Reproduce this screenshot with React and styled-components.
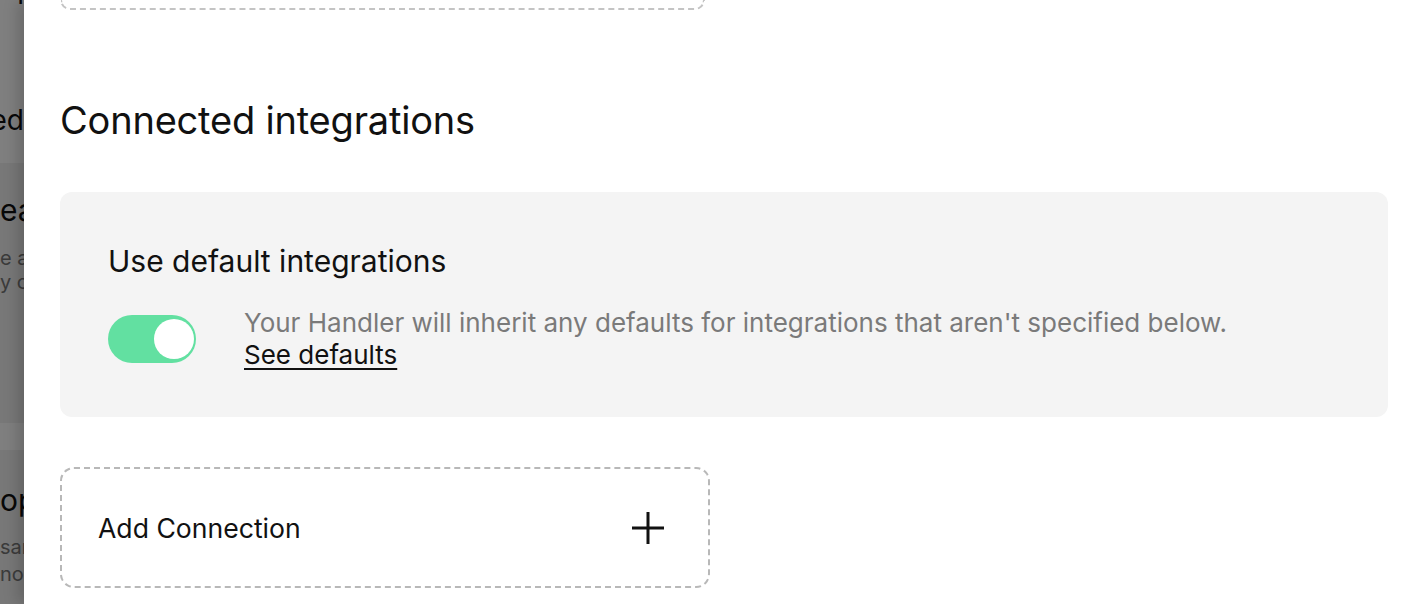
import React from "react";
import styled, { createGlobalStyle } from "styled-components";

const GlobalStyle = createGlobalStyle`
  html, body {
    margin: 0;
    padding: 0;
    height: 100%;
    overflow: hidden;
  }
  body {
    font-family: Inter, "Noto Sans", sans-serif;
    color: #111;
    background: #fff;
  }
  #root {
    height: 100%;
  }
`;

const Screen = styled.div`
  position: relative;
  width: 100%;
  height: 100vh;
  overflow: hidden;
`;

// page underneath the drawer, only its left edge peeks out
const Underlay = styled.div`
  width: 24px;
  height: 100%;
  overflow: hidden;
  display: flex;
  flex-direction: column;
  background: #fff;
`;

const PeekLine = styled.div`
  display: flex;
  justify-content: ${(p) => (p.$end ? "flex-end" : "flex-start")};
  white-space: nowrap;
  font-size: ${(p) => p.$size || 28}px;
  line-height: ${(p) => p.$lh || 32}px;
  color: ${(p) => (p.$muted ? "#777" : "#111")};
  margin-top: ${(p) => p.$mt || 0}px;
`;

const PeekCard = styled.div`
  flex: none;
  background: #f0f0f0;
  margin-top: ${(p) => p.$mt || 0}px;
  height: ${(p) => p.$h}px;
  box-sizing: border-box;
  padding-top: ${(p) => p.$pt || 0}px;
  display: flex;
  flex-direction: column;
`;

const Dim = styled.div`
  position: absolute;
  inset: 0;
  background: rgba(0, 0, 0, 0.5);
`;

const Drawer = styled.div`
  position: absolute;
  top: 0;
  bottom: 0;
  left: 24px;
  right: 0;
  background: #fff;
  box-shadow: -6px 0 14px rgba(0, 0, 0, 0.18);
  padding: 0 36px;
  display: flex;
  flex-direction: column;
  overflow: hidden;
`;

const ClippedBox = styled.div`
  flex: none;
  width: 645px;
  height: 10px;
  box-sizing: border-box;
  border: 2px dashed #c4c4c4;
  border-top: none;
  border-radius: 0 0 14px 14px;
`;

const SectionTitle = styled.h2`
  margin: 90px 0 0;
  font-size: 38px;
  line-height: 40px;
  font-weight: 400;
  letter-spacing: -0.2px;
  color: #111;
`;

const Card = styled.div`
  flex: none;
  margin-top: 52px;
  background: #f4f4f4;
  border-radius: 12px;
  padding: 52px 48px 46px;
  display: flex;
  flex-direction: column;
  gap: 29px;
`;

const CardTitle = styled.div`
  font-size: 30px;
  line-height: 34px;
  color: #111;
`;

const ToggleRow = styled.div`
  display: flex;
  align-items: center;
  gap: 48px;
`;

const Switch = styled.button`
  position: relative;
  flex: none;
  width: 88px;
  height: 48px;
  border: none;
  padding: 0;
  border-radius: 24px;
  background: ${(p) => (p.$on ? "#62e0a1" : "#cfcfcf")};
  cursor: pointer;
`;

const Knob = styled.span`
  position: absolute;
  top: 4px;
  right: ${(p) => (p.$on ? "2px" : "auto")};
  left: ${(p) => (p.$on ? "auto" : "4px")};
  width: 40px;
  height: 40px;
  border-radius: 50%;
  background: #fff;
`;

const Hint = styled.div`
  font-size: 26px;
  line-height: 32px;
  color: #7a7a7a;
`;

const HintLink = styled.a`
  color: #111;
  text-decoration: underline;
  text-underline-offset: 4px;
  text-decoration-thickness: 2px;
  cursor: pointer;
`;

const AddBox = styled.button`
  flex: none;
  margin-top: 50px;
  width: 650px;
  height: 121px;
  box-sizing: border-box;
  border: 2px dashed #b8b8b8;
  border-radius: 14px;
  background: #fff;
  display: flex;
  align-items: center;
  justify-content: space-between;
  padding: 0 43px 0 36px;
  font-family: inherit;
  font-size: 26.6px;
  color: #111;
  cursor: pointer;
`;

const PlusIcon = () => (
  <svg width="34" height="34" viewBox="0 0 34 34" fill="none">
    <path d="M17 1v32M1 17h32" stroke="#111" strokeWidth="3" />
  </svg>
);

export default function App() {
  const [useDefaults, setUseDefaults] = React.useState(true);

  return (
    <Screen>
      <GlobalStyle />
      <Underlay>
        <PeekLine $end $mt={-22}>
          l
        </PeekLine>
        <PeekLine $end $mt={94}>
          Connected
        </PeekLine>
        <PeekCard $mt={27} $h={260} $pt={31}>
          <PeekLine $size={30}>eaders</PeekLine>
          <PeekLine $size={20} $lh={24} $muted $mt={20}>
            e a handler
          </PeekLine>
          <PeekLine $size={20} $lh={24} $muted>
            y channel
          </PeekLine>
        </PeekCard>
        <PeekCard $mt={27} $h={200} $pt={34}>
          <PeekLine $size={30}>options</PeekLine>
          <PeekLine $size={20} $lh={27} $muted $mt={18}>
            sample
          </PeekLine>
          <PeekLine $size={20} $lh={27} $muted>
            nop
          </PeekLine>
        </PeekCard>
      </Underlay>
      <Dim />
      <Drawer>
        <ClippedBox />
        <SectionTitle>Connected integrations</SectionTitle>
        <Card>
          <CardTitle>Use default integrations</CardTitle>
          <ToggleRow>
            <Switch
              $on={useDefaults}
              onClick={() => setUseDefaults((v) => !v)}
              aria-pressed={useDefaults}
            >
              <Knob $on={useDefaults} />
            </Switch>
            <Hint>
              Your Handler will inherit any defaults for integrations that
              aren't specified below.
              <br />
              <HintLink>See defaults</HintLink>
            </Hint>
          </ToggleRow>
        </Card>
        <AddBox>
          <span>Add Connection</span>
          <PlusIcon />
        </AddBox>
      </Drawer>
    </Screen>
  );
}
